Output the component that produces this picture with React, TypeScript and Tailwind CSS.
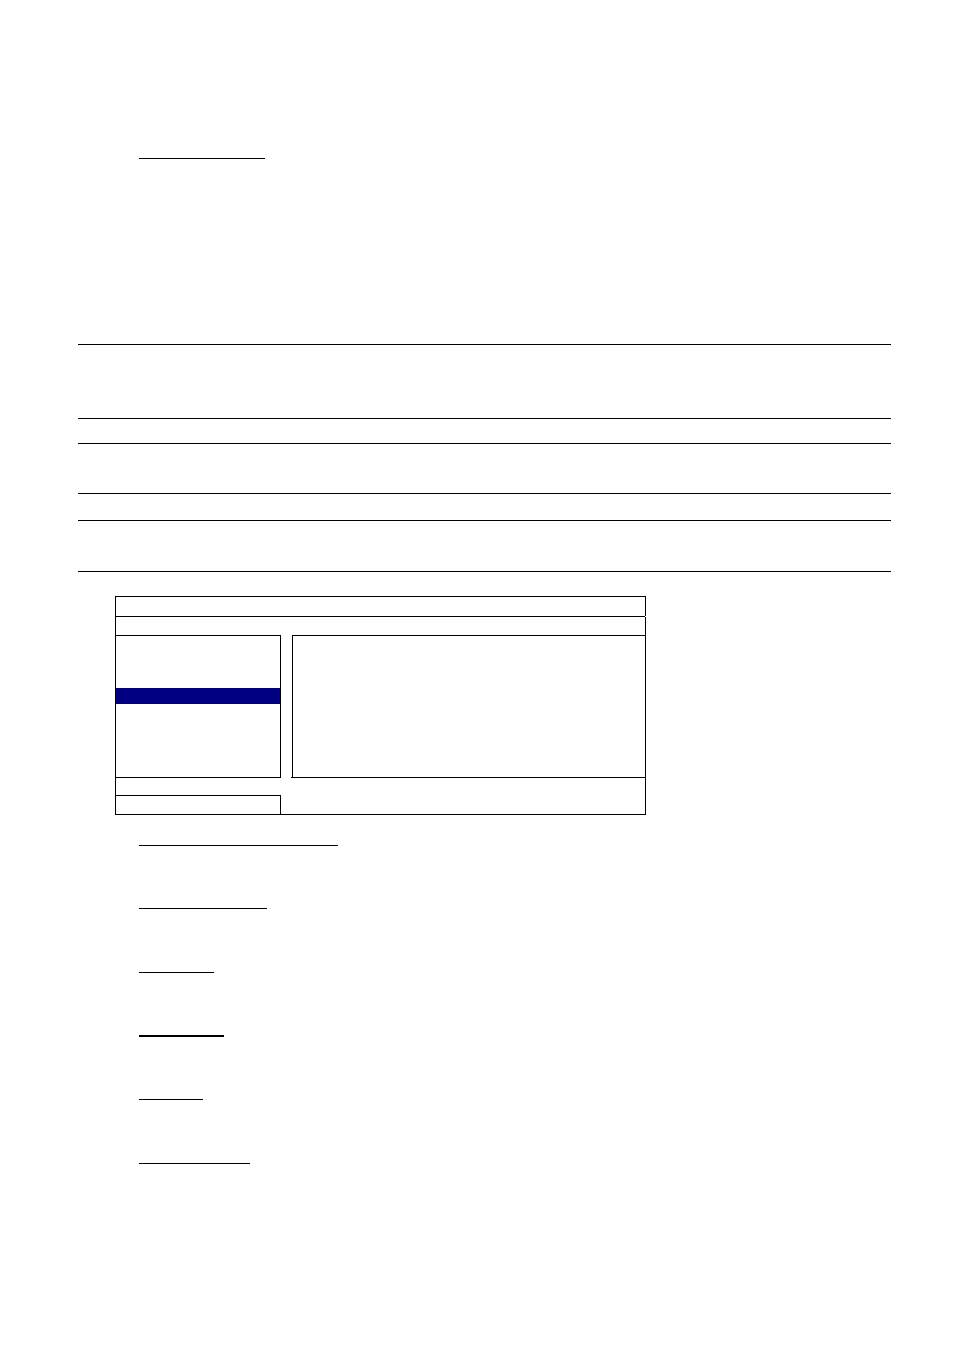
const notes = [
  { id: "first", className: "h-[75px]" },
  { id: "second", className: "mt-6 h-[51px]" },
  { id: "third", className: "mt-[26px] h-[52px]" },
];

const headings = [
  { id: "a", row: "h-[63px]", line: "w-[199px] border-t" },
  { id: "b", row: "h-16", line: "w-32 border-t" },
  { id: "c", row: "h-[63px]", line: "w-[75px] border-t" },
  { id: "d", row: "h-16", line: "w-[85px] border-t-2" },
  { id: "e", row: "h-16", line: "w-16 border-t" },
  { id: "f", row: "h-16", line: "w-[111px] border-t" },
];

export default function App() {
  return (
    <main className="min-h-screen bg-white pt-[158px] pr-[63px] pl-[78px]">
      <div className="ml-[61px] w-[126px] border-t border-black" />

      <section className="mt-[185px]">
        {notes.map((note) => (
          <div
            key={note.id}
            className={`border-y border-black ${note.className}`}
          />
        ))}
      </section>

      <MenuFrame />

      <section className="mt-[30px] ml-[61px]">
        {headings.map((heading) => (
          <div key={heading.id} className={heading.row}>
            <div className={`border-black ${heading.line}`} />
          </div>
        ))}
      </section>
    </main>
  );
}

function MenuFrame() {
  return (
    <section className="mt-6 ml-[37px] max-w-[531px]">
      <div className="h-5 border-x border-t border-black" />
      {/* title divider stops short of the right edge */}
      <div className="mr-px h-px bg-black" />
      <div className="border-x border-b border-black">
        <div className="h-[18px]" />
        <div className="flex h-[143px]">
          <div className="w-[165px] shrink-0 border-y border-r border-black pt-[52px]">
            <div className="h-4 bg-[#000080]" />
          </div>
          <div className="ml-[10px] flex-1 border-b border-black pl-px">
            <div className="h-full border-t border-l border-black" />
          </div>
        </div>
        <div className="mt-[17px] h-[19px] w-[165px] border-t border-r border-black" />
      </div>
    </section>
  );
}
